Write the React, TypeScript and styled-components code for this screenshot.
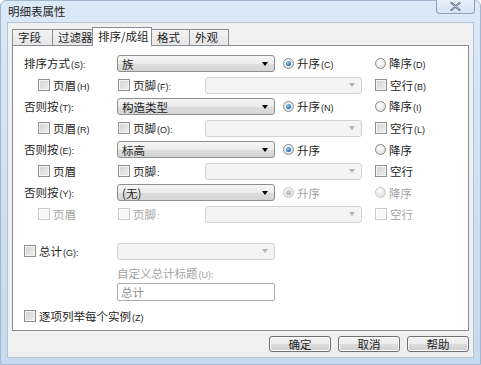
import React from "react";
import styled, { createGlobalStyle, css } from "styled-components";

const GlobalStyle = createGlobalStyle`
  html, body {
    margin: 0;
    padding: 0;
    background: #ffffff;
    overflow: hidden;
  }
  body {
    font-family: "Noto Sans CJK SC", "Liberation Sans", sans-serif;
    font-size: 11.5px;
    color: #1e1e1e;
  }
`;

const Window = styled.div`
  width: 481px;
  height: 365px;
  box-sizing: border-box;
  display: flex;
  flex-direction: column;
  background: linear-gradient(180deg, #dce9f7 0%, #d0e2f4 40%, #c6dbf0 100%);
  border: 1px solid #a3b6cc;
  border-radius: 6px 6px 0 0;
`;

const TitleBar = styled.div`
  height: 21px;
  display: flex;
  align-items: flex-start;
  justify-content: space-between;
  padding-left: 7px;
  padding-right: 5px;
`;

const Title = styled.span`
  margin-top: 3px;
  font-size: 11.5px;
  line-height: 14px;
  color: #1e1e1e;
`;

const CloseButton = styled.div`
  width: 39px;
  height: 14px;
  margin-top: -1px;
  box-sizing: border-box;
  border: 1px solid #8d9fb6;
  border-top: none;
  border-radius: 0 0 4px 4px;
  background: linear-gradient(180deg, #e6f0fa 0%, #d6e4f4 100%);
  display: flex;
  align-items: center;
  justify-content: center;
`;

const Body = styled.div`
  flex: 1;
  margin: 0 6px 6px 6px;
  background: #f0f0f0;
  border: 1px solid #b3c3d6;
  padding: 4px 4px 0 4px;
  display: flex;
  flex-direction: column;
`;

const TabStrip = styled.div`
  display: flex;
  align-items: flex-end;
  height: 18px;
  padding-left: 1px;
  position: relative;
  z-index: 1;
`;

const Tab = styled.div<{ $active?: boolean; $w: number }>`
  width: ${(p) => p.$w}px;
  box-sizing: border-box;
  height: 16px;
  border: 1px solid #898c95;
  border-bottom: none;
  margin-left: -1px;
  background: linear-gradient(180deg, #f3f3f3 0%, #e6e6e6 100%);
  font-size: 11.5px;
  line-height: 15px;
  padding-left: 5px;
  white-space: nowrap;
  overflow: hidden;
  ${(p) =>
    p.$active &&
    css`
      height: 19px;
      background: #ffffff;
      margin-bottom: -1px;
      line-height: 17px;
      padding-left: 5px;
      z-index: 2;
    `}
`;

const Panel = styled.div`
  width: 457px;
  height: 286px;
  box-sizing: border-box;
  border: 1px solid #898c95;
  background: #ffffff;
  padding: 7px 0 0 11px;
  display: flex;
  flex-direction: column;
`;

const Row = styled.div<{ $h?: number; $mt?: number; $pl?: number }>`
  display: flex;
  align-items: center;
  height: ${(p) => p.$h ?? 21}px;
  margin-top: ${(p) => p.$mt ?? 0}px;
  padding-left: ${(p) => p.$pl ?? 0}px;
`;

const Label = styled.div<{ $w: number; $disabled?: boolean }>`
  width: ${(p) => p.$w}px;
  flex-shrink: 0;
  color: ${(p) => (p.$disabled ? "#a3a3a3" : "#1e1e1e")};
  white-space: nowrap;
  line-height: 14px;
`;

const Acc = styled.span`
  font-size: 9px;
  font-family: "Liberation Sans", sans-serif;
  margin-left: 1px;
  line-height: 12px;
`;

const SelectBox = styled.div<{ $w: number; $disabled?: boolean }>`
  width: ${(p) => p.$w}px;
  height: 17px;
  box-sizing: border-box;
  border: 1px solid ${(p) => (p.$disabled ? "#d3d3d3" : "#8e8f8f")};
  border-radius: 3px;
  background: ${(p) =>
    p.$disabled
      ? "#f4f4f4"
      : "linear-gradient(180deg, #f6f6f6 0%, #ebebeb 50%, #dddddd 51%, #d5d5d5 100%)"};
  display: flex;
  align-items: center;
  justify-content: space-between;
  padding: 0 6px 0 4px;
  flex-shrink: 0;
  font-size: 11.5px;
  line-height: 14px;
  color: #1e1e1e;
`;

const Arrow = styled.span<{ $disabled?: boolean }>`
  width: 0;
  height: 0;
  border-left: 3.5px solid transparent;
  border-right: 3.5px solid transparent;
  border-top: 4px solid ${(p) => (p.$disabled ? "#b5b5b5" : "#000000")};
`;

const Option = styled.div<{ $w?: number; $ml?: number; $disabled?: boolean }>`
  ${(p) => (p.$w ? `width: ${p.$w}px;` : "")}
  margin-left: ${(p) => p.$ml ?? 0}px;
  flex-shrink: 0;
  display: flex;
  align-items: center;
  gap: 3px;
  line-height: 14px;
  color: ${(p) => (p.$disabled ? "#a3a3a3" : "#1e1e1e")};
  white-space: nowrap;
`;

const RadioMark = styled.span<{ $checked?: boolean; $disabled?: boolean }>`
  width: 11px;
  height: 11px;
  box-sizing: border-box;
  border-radius: 50%;
  border: 1px solid ${(p) => (p.$disabled ? "#c9c9c9" : "#8a8a8a")};
  background: radial-gradient(circle at 40% 35%, #ffffff 0%, #e2e2e2 70%, #cfcfcf 100%);
  display: flex;
  align-items: center;
  justify-content: center;
  flex-shrink: 0;
  &::after {
    content: "";
    display: ${(p) => (p.$checked ? "block" : "none")};
    width: 5px;
    height: 5px;
    border-radius: 50%;
    background: ${(p) =>
      p.$disabled
        ? "radial-gradient(circle at 40% 35%, #d8d8d8, #9c9c9c)"
        : "radial-gradient(circle at 40% 35%, #8fd3f5, #1b6fb5 70%, #0d4a8a)"};
  }
`;

const CheckMark = styled.span<{ $disabled?: boolean }>`
  width: 12px;
  height: 12px;
  box-sizing: border-box;
  border: 1px solid ${(p) => (p.$disabled ? "#c9c9c9" : "#8e8f8f")};
  background: ${(p) =>
    p.$disabled ? "#f7f7f7" : "linear-gradient(135deg, #d2d2d2 0%, #f0f0f0 100%)"};
  box-shadow: inset 0 0 0 1px ${(p) => (p.$disabled ? "#ffffff" : "#f4f4f4")};
  flex-shrink: 0;
`;

const TextInput = styled.div`
  width: 158px;
  height: 18px;
  box-sizing: border-box;
  border: 1px solid #abadb3;
  border-radius: 2px;
  padding-left: 3px;
  color: #8d8d8d;
  line-height: 16px;
  font-size: 11.5px;
`;

const Footer = styled.div`
  display: flex;
  justify-content: flex-end;
  gap: 7px;
  padding: 5px 0 0 0;
`;

const Button = styled.div`
  width: 62px;
  height: 16px;
  box-sizing: border-box;
  border: 1px solid #707070;
  border-radius: 3px;
  background: linear-gradient(180deg, #f2f2f2 0%, #ebebeb 50%, #dddddd 51%, #cfcfcf 100%);
  box-shadow: inset 0 0 0 1px #fbfbfb;
  font-size: 11.5px;
  line-height: 14px;
  text-align: center;
  color: #1e1e1e;
`;

const tabs = [
  { name: "字段", w: 41 },
  { name: "过滤器", w: 41 },
  { name: "排序/成组", w: 60, active: true },
  { name: "格式", w: 39 },
  { name: "外观", w: 40 },
];

type Group = {
  label: string;
  acc?: string;
  value: string;
  asc: string;
  desc: string;
  header?: string;
  footer?: string;
  blank?: string;
  muted?: boolean;
};

const groups: Group[] = [
  { label: "排序方式", acc: "(S):", value: "族", asc: "(C)", desc: "(D)", header: "(H)", footer: "(F):", blank: "(B)" },
  { label: "否则按", acc: "(T):", value: "构造类型", asc: "(N)", desc: "(I)", header: "(R)", footer: "(O):", blank: "(L)" },
  { label: "否则按", acc: "(E):", value: "标高", asc: "", desc: "" },
  { label: "否则按", acc: "(Y):", value: "(无)", asc: "", desc: "", muted: true },
];

const App: React.FC = () => {
  return (
    <>
      <GlobalStyle />
      <Window>
        <TitleBar>
          <Title>明细表属性</Title>
          <CloseButton>
            <svg width="11" height="9" viewBox="0 0 11 9">
              <path
                d="M1.5 1 L9.5 8 M9.5 1 L1.5 8"
                stroke="#5b6f86"
                strokeWidth="2.2"
                strokeLinecap="round"
              />
              <path d="M1.5 1 L9.5 8 M9.5 1 L1.5 8" stroke="#e8eef6" strokeWidth="0.7" />
            </svg>
          </CloseButton>
        </TitleBar>
        <Body>
          <TabStrip>
            {tabs.map((t) => (
              <Tab key={t.name} $w={t.w} $active={t.active}>
                {t.name}
              </Tab>
            ))}
          </TabStrip>
          <Panel>
            {groups.map((g, i) => (
              <React.Fragment key={i}>
                <Row $h={21}>
                  <Label $w={93}>
                    {g.label}
                    <Acc>{g.acc}</Acc>
                  </Label>
                  <SelectBox $w={158}>
                    <span>{g.value}</span>
                    <Arrow />
                  </SelectBox>
                  <Option $w={92} $ml={8} $disabled={g.muted}>
                    <RadioMark $checked $disabled={g.muted} />
                    <span>
                      升序{g.asc && <Acc>{g.asc}</Acc>}
                    </span>
                  </Option>
                  <Option $disabled={g.muted}>
                    <RadioMark $disabled={g.muted} />
                    <span>
                      降序{g.desc && <Acc>{g.desc}</Acc>}
                    </span>
                  </Option>
                </Row>
                <Row $h={22} $pl={14}>
                  <Option $w={80} $disabled={g.muted}>
                    <CheckMark $disabled={g.muted} />
                    <span>
                      页眉{g.header && <Acc>{g.header}</Acc>}
                    </span>
                  </Option>
                  <Option $w={87} $disabled={g.muted}>
                    <CheckMark $disabled={g.muted} />
                    <span>
                      页脚{g.footer ? <Acc>{g.footer}</Acc> : <Acc>:</Acc>}
                    </span>
                  </Option>
                  <SelectBox $w={157} $disabled>
                    <span />
                    <Arrow $disabled />
                  </SelectBox>
                  <Option $ml={13} $disabled={g.muted}>
                    <CheckMark $disabled={g.muted} />
                    <span>
                      空行{g.blank && <Acc>{g.blank}</Acc>}
                    </span>
                  </Option>
                </Row>
              </React.Fragment>
            ))}
            <Row $h={22} $mt={15}>
              <Option $w={93}>
                <CheckMark />
                <span>
                  总计<Acc>(G):</Acc>
                </span>
              </Option>
              <SelectBox $w={158} $disabled>
                <span />
                <Arrow $disabled />
              </SelectBox>
            </Row>
            <Row $h={14} $mt={4} $pl={93}>
              <Label $w={158} $disabled>
                自定义总计标题<Acc>(U):</Acc>
              </Label>
            </Row>
            <Row $h={18} $mt={3} $pl={93}>
              <TextInput>总计</TextInput>
            </Row>
            <Row $h={18} $mt={6}>
              <Option>
                <CheckMark />
                <span>
                  逐项列举每个实例<Acc>(Z)</Acc>
                </span>
              </Option>
            </Row>
          </Panel>
          <Footer>
            <Button>确定</Button>
            <Button>取消</Button>
            <Button>帮助</Button>
          </Footer>
        </Body>
      </Window>
    </>
  );
};

export default App;
